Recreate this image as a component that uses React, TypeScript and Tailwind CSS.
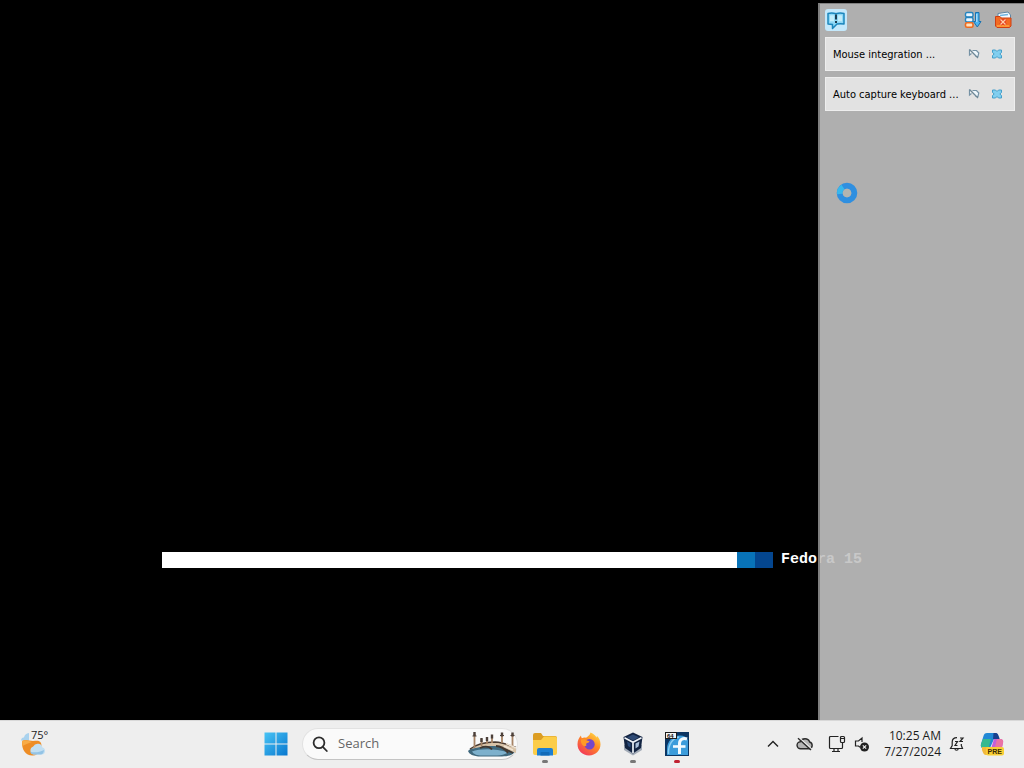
import type { ReactNode } from 'react'

const notifications = ['Mouse integration ...', 'Auto capture keyboard ...']

function MessageIcon() {
  return (
    <svg width="22" height="22" viewBox="0 0 22 22" fill="none">
      <rect width="22" height="22" rx="3" fill="#c4e8fb" />
      <path d="M3 4.500c3-.8 5.500-.6 8 .3 2.500-.9 5-1.100 8-.3v10.500c-2.500-.5-4.500-.5-7 0L7.500 19.500V15.500c-1.500-.4-3-.5-4.500-.5z" fill="#8fd8f6" stroke="#1b86bd" strokeWidth="1.500" strokeLinejoin="round" />
      <path d="M5 6.500c1.500-.3 3-.2 4 0v6c-1-.2-2.500-.3-4 0zM13 6.500c1.500-.3 3-.3 4 0v6c-1-.2-2.500-.2-4 0z" fill="#c3edfb" />
      <path d="M11 5.500v5M11 12v2" stroke="#102c40" strokeWidth="1.800" />
    </svg>
  )
}

function SortIcon() {
  return (
    <svg width="18" height="18" viewBox="0 0 18 18" fill="none">
      <rect x="1.500" y="1.500" width="7.500" height="4.500" rx="1.500" fill="#eaf6ff" stroke="#2484bf" strokeWidth="1.400" />
      <rect x="1.500" y="6.500" width="7.500" height="4.500" rx="1.500" fill="#eaf6ff" stroke="#2484bf" strokeWidth="1.400" />
      <rect x="1.500" y="11.800" width="7.500" height="4.500" rx="1.500" fill="#ffe3c0" stroke="#ee6a1e" strokeWidth="1.600" />
      <path d="M11.500 1.500h3.500v9h2l-3.700 5.500-3.800-5.500h2z" fill="#4bb4f0" stroke="#1872b0" />
      <path d="M12.800 3v8" stroke="#c8ecff" />
    </svg>
  )
}

function DeleteAllIcon() {
  return (
    <svg width="18" height="18" viewBox="0 0 18 18" fill="none">
      <path d="M4 6V2.500L14 1l2.500 3v5" fill="#f3faff" stroke="#5f86a4" />
      <path d="M6 4.500 14 3.500" stroke="#6fb4e2" strokeWidth="1.500" />
      <path d="M1.500 5.500h4.500l1.500 1.500h9.500v8l-1.500 1.500H3L1.500 15z" fill="#f26a22" stroke="#cf3e12" strokeLinejoin="round" />
      <path d="M2.800 15h12.400" stroke="#ffa33a" strokeWidth="1.600" />
      <path d="m6.500 8.500 5 5M11.500 8.500l-5 5" stroke="#e02a18" strokeWidth="3" />
      <path d="m6.500 8.500 5 5M11.500 8.500l-5 5" stroke="#ffd0a8" strokeWidth="1.400" />
    </svg>
  )
}

function DetachIcon() {
  return (
    <svg width="12" height="12" viewBox="0 0 12 12" fill="none">
      <path d="M4.500 2.500h4L10.800 5 10 8.500H7.500" fill="#eef6fb" stroke="#7592a5" strokeWidth="1.200" />
      <path d="M1.500 1.500v5.500l2-1.500" stroke="#7592a5" strokeWidth="1.200" fill="#ffffff" />
      <path d="M1.500 1.500 10 10" stroke="#6d8696" strokeWidth="1.300" />
    </svg>
  )
}

function CloseIcon() {
  return (
    <svg width="12" height="12" viewBox="0 0 12 12" fill="none">
      <path d="M1.500 2h3L6 3.500 7.500 2h3v2.500L8.800 6l1.700 1.500V10h-3L6 8.500 4.500 10h-3V7.500L3.200 6 1.500 4.500z" fill="#80cff0" stroke="#459fca" />
    </svg>
  )
}

function BusyCursor() {
  return (
    <svg width="24" height="24" viewBox="0 0 24 24" fill="none" className="absolute left-[15px] top-[177px]">
      <circle cx="12" cy="12" r="7.300" stroke="#2f8fe0" strokeWidth="6" />
      <path d="M4.800 13A7.300 7.300 0 0 1 8 6" stroke="#38b8ec" strokeWidth="5.500" />
      <circle cx="12" cy="12" r="4.300" fill="#b4b4b0" />
    </svg>
  )
}

function WeatherIcon() {
  return (
    <svg width="26" height="26" viewBox="0 0 26 26" fill="none">
      <path d="M1 9.500C1 7 3 6.500 4 6.500 4.500 4 6 2.500 9 2v7.500z" fill="#a9d2ee" />
      <path d="M2 10c4-2 7 0 11 0s6-1 8 2a9.500 9.500 0 0 1-8 12.500C6 25 1.500 19 2 10z" fill="#ee8d25" />
      <path d="M2 10c4-2 7 0 10 1-4 1-7 3-9.500 4z" fill="#f8ab46" />
      <path d="M13.500 23.500a4.200 4.200 0 0 1-.3-8 5 5 0 0 1 9.300 1 3.600 3.600 0 0 1-.5 7z" fill="#c2dff2" />
      <path d="M13.500 23.500a4.200 4.200 0 0 1-3.500-3c4 1.500 9 1 14-1.500-.2 2.500-1 4-3 4.500z" fill="#93c3e5" />
    </svg>
  )
}

function WindowsIcon() {
  return (
    <svg width="24" height="24" viewBox="0 0 24 24">
      <defs>
        <linearGradient id="win" x1="0" y1="0" x2="1" y2="1">
          <stop stopColor="#48c4f5" />
          <stop offset="1" stopColor="#0877cf" />
        </linearGradient>
      </defs>
      <path d="M.5.500h11v11H.5zM12.500.500h11v11h-11zM.5 12.500h11v11H.5zM12.500 12.500h11v11h-11z" fill="url(#win)" />
    </svg>
  )
}

function SearchIcon() {
  return (
    <svg width="16" height="16" viewBox="0 0 16 16" fill="none" stroke="#2c2c2c" strokeWidth="1.800">
      <circle cx="7" cy="6.800" r="5.400" />
      <path d="m10.800 10.800 4 4.200" strokeLinecap="round" />
    </svg>
  )
}

function BridgeArt() {
  return (
    <svg width="50" height="28" viewBox="0 0 50 28" fill="none">
      <path d="M1 21c5-5 15-7 25-6 12 0 18 3 23 4-1 5-6 7.500-14 7.500H14C6 26.500 2 24 1 21z" fill="#40697e" />
      <path d="M5 21.500c8-3 24-3 36 1-3 2-7 3-11 3H15c-5 0-8-1-10-4z" fill="#7db0cc" />
      <path d="M4 19C12 13 20 12 28 12c9 .5 15 3 21 6v5C42 21 36 16.500 28 16 18 15.500 11 17 4 19z" fill="#d8c3a8" />
      <path d="M3 19C10 14 19 12 28 12c9 .5 15 3.500 21 5.500" stroke="#4b3b31" strokeWidth="1.500" />
      <path d="M13 18c5-2 9-2 12 1.500M29 16c5 0 9 3 12 7M34 17l12 6" stroke="#42372f" strokeWidth="1.800" />
      <path d="M7.500 4v14M14.500 9v7M20 8v6M25 6v7M35 4v9M45.500 4v12" stroke="#a78466" strokeWidth="1.800" />
      <path d="M7.500 2v4M14.500 8v4M20 7v4M25 4.500v4M35 2.500v4M45.500 2.500v4" stroke="#4c403a" strokeWidth="2.400" />
      <path d="M5.500 6h4M33 5.500h4M43.500 5.500h4" stroke="#4c403a" />
      <path d="M39 13.500 49 18M37 16l9 4" stroke="#f1e4d4" strokeWidth="1.500" />
    </svg>
  )
}

function FolderIcon() {
  return (
    <svg width="26" height="24" viewBox="0 0 26 24">
      <path d="M1 3a2 2 0 0 1 2-2h6l2 3h12a2 2 0 0 1 2 2v4H1z" fill="#dc9d22" />
      <path d="M1 8h8l3-3.500h11a2 2 0 0 1 2 2V21a2 2 0 0 1-2 2H3a2 2 0 0 1-2-2z" fill="#fccd48" />
      <path d="M5 23.500V18a2 2 0 0 1 2-2h12a2 2 0 0 1 2 2v5.500z" fill="#1d7fd2" />
      <path d="M8.500 23.500V21a1 1 0 0 1 1-1h7a1 1 0 0 1 1 1v2.500z" fill="#136bb8" />
    </svg>
  )
}

function FirefoxIcon() {
  return (
    <svg width="24" height="24" viewBox="0 0 24 24">
      <defs>
        <linearGradient id="fox" x1=".9" y1="0" x2=".2" y2="1">
          <stop stopColor="#ffe14a" />
          <stop offset=".45" stopColor="#ff8a22" />
          <stop offset="1" stopColor="#f2325f" />
        </linearGradient>
      </defs>
      <path d="M12 23.500C5.500 23.500.500 18.600.500 12.300.500 8.500 2 5.500 4 3.500c0 1.200.3 2 .9 2.700C6 5.500 7.500 5.300 9 5.700 11 4.500 13 3 13.500.500c3 1 5 3 6 5 .3-.5.400-1 .3-1.700 2.300 2 3.700 5 3.700 8.500 0 6.300-5 11.200-11.500 11.200z" fill="url(#fox)" />
      <circle cx="12.500" cy="12.200" r="5.200" fill="#7447c9" />
      <path d="M4 7.500c2.500-.8 4.500-.2 6 1 1.500.2 2.300.6 2.500 1.200-.7 1-2 1.200-3 1.600-.5.800-.5 1.500 0 2.200-1 1-2.500 1-3.500 0C4.500 12 3.500 10 4 7.500z" fill="#ff9a27" />
    </svg>
  )
}

function VirtualBoxIcon() {
  return (
    <svg width="22" height="24" viewBox="0 0 22 24">
      <path d="M2 13v5l9 5.500 9-5.500v-5z" fill="#a3acb8" />
      <path d="m11 .5 9.500 4.500-1.500 11-8 5.500L3 16 1.500 5z" fill="#132442" />
      <path d="M11 2.500 17 5.300 11 8.500 5 5.300z" fill="#2e4a75" />
      <path d="m2.500 5.800 8.500 4.400 8.500-4.400M11 10.200V21" stroke="#edf2f8" strokeWidth="1.700" fill="none" />
      <path d="m5 9.500 3.500 2v4L6 14z" fill="#2a4a7a" />
      <path d="m13.500 11.500 4-2-1 5-3 2z" fill="#a9bfda" />
    </svg>
  )
}

function FedoraVmIcon() {
  return (
    <svg width="24" height="24" viewBox="0 0 24 24" fill="none">
      <rect width="24" height="24" fill="#0b3563" />
      <path d="M2 23V17C2 9 8 3.500 15 3.500c4 0 7 1.500 8 4.500v15z" fill="#3b9cdb" />
      <path d="M3.500 22C3 12 8 6 14 5" stroke="#8fd0f3" strokeWidth="1.500" />
      <path d="M22 7c-4-1.500-7.500.5-7.500 4.500V22" stroke="#f2faff" strokeWidth="3" />
      <path d="M8 14.500h12.500" stroke="#f2faff" strokeWidth="2.600" />
      <rect x=".5" y=".5" width="11" height="6" fill="#f5f5f5" stroke="#1c1c1c" />
      <text x="2" y="6" fontSize="6" fontWeight="700" fontFamily="Liberation Sans, sans-serif" fill="#111">64</text>
    </svg>
  )
}

function ChevronIcon() {
  return (
    <svg width="12" height="8" viewBox="0 0 12 8" fill="none" stroke="#222" strokeWidth="1.400">
      <path d="m1 6.500 5-5 5 5" />
    </svg>
  )
}

function CloudOffIcon() {
  return (
    <svg width="18" height="16" viewBox="0 0 18 16" fill="none" stroke="#2b2b2b" strokeWidth="1.400">
      <path d="M4.800 12.800a3.500 3.500 0 0 1-.5-7C5 3.800 7 2.800 9 2.800s4 1.200 4.600 3.200a3.500 3.500 0 0 1-.2 6.800z" fill="#b5b5b5" />
      <path d="m3.200 1.800 13 11.800" stroke="#eeeeee" strokeWidth="1.300" />
      <path d="m2 2.200 13 11.800" />
    </svg>
  )
}

function NetworkIcon() {
  return (
    <svg width="18" height="18" viewBox="0 0 18 18" fill="none" stroke="#222" strokeWidth="1.200">
      <path d="M10.500 1.500h-8a1 1 0 0 0-1 1v10a1 1 0 0 0 1 1h11a1 1 0 0 0 1-1V9M6 13.500v3M10 13.500v3M4 16.500h8" />
      <rect x="12.500" y="1.500" width="4" height="6" rx="1" />
      <path d="M14.500 7.500V9M12.500 3.500h4" />
    </svg>
  )
}

function MutedIcon() {
  return (
    <svg width="16" height="16" viewBox="0 0 16 16" fill="none" stroke="#222" strokeWidth="1.200">
      <path d="M8 6V2L4.500 5H1.500v5h3l1.500 1.300" />
      <circle cx="10.500" cy="11" r="4.500" fill="#222" stroke="none" />
      <path d="m8.800 9.300 3.400 3.400M12.200 9.300l-3.400 3.400" stroke="#eee" />
    </svg>
  )
}

function SnoozeBellIcon() {
  return (
    <svg width="16" height="16" viewBox="0 0 16 16" fill="none" stroke="#222" strokeWidth="1.200">
      <path d="M8 1.600C5 1.600 3.200 3.500 3.200 6v3.500L1.500 12.500h12L12.300 9.500V8M5.800 12.500c.3 2.300 3.200 2.300 3.500 0" />
      <path d="M6 5.500h2.500L6 9.500h2.500M11 2h3l-3 3.500h3" />
    </svg>
  )
}

function CopilotIcon() {
  return (
    <svg width="24" height="24" viewBox="0 0 24 24">
      <path d="M7 1h8c2 0 2.500 1.500 3 3l1 3h-5L10 16H3c-2 0-2.500-2-2-4L3.500 4C4 2 5 1 7 1z" fill="#2188d5" />
      <path d="M3 7h8l-2.500 9H3c-2 0-2.500-2-2-4z" fill="#35b98f" />
      <path d="M13.500 1H16c1.500 0 2.200 1.500 2.700 3l1 3H13z" fill="#18408e" />
      <path d="M14 7h6c3 0 3.500 2 3 4l-2 9H10z" fill="#c65fd8" />
      <path d="M17 7h3c3 0 3.500 2 3 4l-1 4h-7z" fill="#ea74a4" />
      <path d="M2 15h9l-2 8H6c-2 0-3-2-4-5z" fill="#f2b83a" />
      <rect x="6" y="15" width="18" height="8.500" rx="2" fill="#f8cf35" />
      <text x="7.500" y="22" fontSize="7" fontWeight="700" fontFamily="Liberation Sans, sans-serif" fill="#3b2a05">PRE</text>
    </svg>
  )
}

function BootSplash() {
  return (
    <div className="flex flex-1 items-end px-[162px] pb-[152px]">
      <div className="flex h-4 flex-1 items-center gap-2">
        <div role="progressbar" aria-label="Fedora 15" className="flex h-4 flex-1">
          <div className="flex-1 bg-white" />
          <div className="w-[18px] bg-[#0873b8]" />
          <div className="w-[18px] bg-[#04468f]" />
        </div>
        <span className="whitespace-nowrap font-['Liberation_Mono',monospace] text-[15px] font-bold leading-4 text-white">
          Fedora 15
        </span>
      </div>
    </div>
  )
}

function NotificationCenter() {
  return (
    <aside className="absolute bottom-0 right-0 top-[3px] w-[206px] border-l-2 border-t border-[#808080] bg-[#c2c2c2]/90 pl-[5px] pr-[9px] pt-[5px]">
      <div className="flex h-[22px] items-center pr-[3px]">
        <button type="button" aria-label="Keep notifications open"><MessageIcon /></button>
        <button type="button" aria-label="Sort notifications" className="ml-auto"><SortIcon /></button>
        <button type="button" aria-label="Delete all notifications" className="ml-3"><DeleteAllIcon /></button>
      </div>
      <ul className="mt-[6px] flex flex-col gap-[6px]">
        {notifications.map((title) => (
          <li key={title} className="flex h-[34px] items-center border border-[#eeeeee] bg-[#e2e2e2] pl-[7px] pr-[11px]">
            <span className="flex-1 whitespace-nowrap pt-[3px] font-['DejaVu_Sans_Condensed','DejaVu_Sans',sans-serif] text-[11px] text-black">
              {title}
            </span>
            <button type="button" aria-label="Do not show again"><DetachIcon /></button>
            <button type="button" aria-label="Close" className="ml-[11px]"><CloseIcon /></button>
          </li>
        ))}
      </ul>
      <BusyCursor />
    </aside>
  )
}

interface AppButtonProps {
  label: string
  indicator?: string
  children: ReactNode
}

function AppButton({ label, indicator = '', children }: AppButtonProps) {
  return (
    <button type="button" aria-label={label} className="relative flex h-12 w-11 items-center justify-center">
      {children}
      {/* running app dash */}
      {indicator && <span className={`absolute bottom-[5px] h-[3px] w-[6px] rounded-full ${indicator}`} />}
    </button>
  )
}

function Taskbar() {
  return (
    <footer className="flex h-12 items-center border-t border-[#d8d8d8] bg-[#eeeeee] pb-px font-['Open_Sans',sans-serif] text-[#1c1c1c]">
      <div className="w-1/4 shrink-0 pl-5">
        <button type="button" aria-label="Weather" className="relative block">
          <WeatherIcon />
          <span className="absolute -top-1 left-[11px] text-[11px] leading-4">75°</span>
        </button>
      </div>

      <button type="button" aria-label="Start" className="flex h-12 w-10 items-center justify-center">
        <WindowsIcon />
      </button>
      <label className="ml-[6px] mr-[5px] flex h-8 w-[216px] items-center rounded-full border border-[#e2e2e2] border-b-[#c4c4c4] bg-[#fafafa] pl-[9px]">
        <SearchIcon />
        <input
          type="text"
          aria-label="Search"
          placeholder="Search"
          className="ml-[10px] w-0 flex-1 bg-transparent text-[13px] outline-none placeholder:text-[#666666]"
        />
        <BridgeArt />
      </label>
      <AppButton label="File Explorer" indicator="bg-[#777777]"><FolderIcon /></AppButton>
      <AppButton label="Firefox"><FirefoxIcon /></AppButton>
      <AppButton label="VirtualBox" indicator="bg-[#777777]"><VirtualBoxIcon /></AppButton>
      <AppButton label="Fedora 15" indicator="bg-[#c02030]"><FedoraVmIcon /></AppButton>

      <div className="ml-auto flex items-center pr-5">
        <button type="button" aria-label="Show hidden icons"><ChevronIcon /></button>
        <button type="button" aria-label="OneDrive" className="ml-[17px]"><CloudOffIcon /></button>
        <button type="button" aria-label="Network" className="ml-[14px]"><NetworkIcon /></button>
        <button type="button" aria-label="Volume" className="ml-2"><MutedIcon /></button>
        <button type="button" className="ml-[14px] whitespace-nowrap text-right text-[12px] leading-4">
          <time className="block">10:25 AM</time>
          <time className="block">7/27/2024</time>
        </button>
        <button type="button" aria-label="Notifications" className="ml-2"><SnoozeBellIcon /></button>
        <button type="button" aria-label="Copilot" className="ml-[15px]"><CopilotIcon /></button>
      </div>
    </footer>
  )
}

export default function App() {
  return (
    <div className="flex min-h-screen flex-col">
      <main className="relative flex flex-1 overflow-hidden bg-black">
        <BootSplash />
        <NotificationCenter />
      </main>
      <Taskbar />
    </div>
  )
}
